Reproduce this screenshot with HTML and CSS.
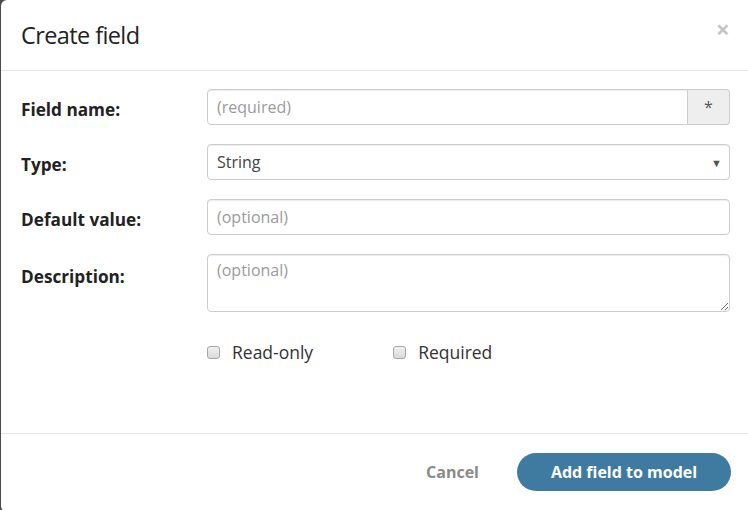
FILE: index.html
```html
<!DOCTYPE html>
<html>
<head>
<meta charset="utf-8">
<link rel="stylesheet" href="styles.css">
</head>
<body>
<div class="modal">
  <div class="modal-header">
    <h1 class="modal-title">Create field</h1>
    <span class="close">×</span>
  </div>
  <form class="modal-body">
    <div class="row">
      <label class="label">Field name:</label>
      <div class="input-group">
        <input class="control group-input" type="text" placeholder="(required)">
        <span class="addon">*</span>
      </div>
    </div>
    <div class="row">
      <label class="label">Type:</label>
      <div class="control select">
        <span>String</span>
        <span class="caret">▼</span>
      </div>
    </div>
    <div class="row">
      <label class="label">Default value:</label>
      <input class="control" type="text" placeholder="(optional)">
    </div>
    <div class="row row-top">
      <label class="label label-top">Description:</label>
      <textarea class="control textarea" placeholder="(optional)"></textarea>
    </div>
    <div class="row checks">
      <span></span>
      <div class="check-list">
        <span class="check"><span class="box"></span>Read-only</span>
        <span class="check"><span class="box"></span>Required</span>
      </div>
    </div>
  </form>
  <div class="modal-footer">
    <button class="btn-link" type="button">Cancel</button>
    <button class="btn-primary" type="button">Add field to model</button>
  </div>
</div>
</body>
</html>
```
FILE: styles.css
```css
html, body {
  margin: 0;
  padding: 0;
  background: #4b4b4b;
  height: 510px;
  overflow: hidden;
}
body {
  font-family: "Open Sans", sans-serif;
  font-size: 16px;
  color: #333;
}
.modal {
  margin-left: 1px;
  width: 760px;
  height: 512px;
  background: #fff;
  border-radius: 6px;
  box-sizing: border-box;
}
.modal-header {
  height: 71px;
  box-sizing: border-box;
  border-bottom: 1px solid #e5e5e5;
  display: flex;
  align-items: center;
  padding: 0 32px 0 20px;
  position: relative;
}
.modal-title {
  margin: 0;
  font-size: 23.5px;
  font-weight: 400;
  letter-spacing: -0.6px;
  color: #222;
  flex: 1;
  padding-bottom: 1px;
}
.close {
  position: absolute;
  left: 715px;
  top: 17px;
  font-size: 24px;
  font-weight: 700;
  color: #c4c4c4;
  line-height: 1;
}
.modal-body {
  padding: 18px 30px 0 20px;
  display: flex;
  flex-direction: column;
  gap: 19px;
  height: 363px;
  box-sizing: border-box;
  border-bottom: 1px solid #e5e5e5;
  margin: 0;
}
.row {
  display: grid;
  grid-template-columns: 186px 523px;
  align-items: center;
}
.row-top {
  align-items: start;
}
.label {
  font-weight: 700;
  font-size: 17.2px;
  color: #222;
  padding-top: 5px;
}
.label-top {
  padding-top: 11px;
}
.control {
  box-sizing: border-box;
  height: 36px;
  border: 1px solid #ccc;
  border-radius: 4px;
  padding: 0 9px;
  font-family: "Open Sans", sans-serif;
  font-size: 16px;
  color: #444;
  box-shadow: inset 0 1px 1px rgba(0,0,0,0.075);
  outline: none;
  width: 100%;
  background: #fff;
}
.control::placeholder {
  color: #9a9a9a;
}
.input-group {
  display: flex;
}
.group-input {
  border-radius: 4px 0 0 4px;
  flex: 1;
}
.addon {
  width: 42px;
  box-sizing: border-box;
  height: 36px;
  border: 1px solid #ccc;
  border-left: none;
  border-radius: 0 4px 4px 0;
  background: #eee;
  display: flex;
  align-items: center;
  justify-content: center;
  color: #555;
  font-size: 16px;
}
.select {
  display: flex;
  align-items: center;
  justify-content: space-between;
  padding-right: 7px;
}
.caret {
  font-size: 11px;
  color: #555;
}
.textarea {
  height: 58px;
  padding-top: 5px;
  resize: both;
  line-height: 1.3;
}
.checks {
  margin-top: 9px;
}
.check-list {
  display: flex;
  gap: 80px;
}
.check {
  display: flex;
  align-items: center;
  gap: 12px;
  color: #333;
  font-size: 17.5px;
}
.box {
  width: 13px;
  height: 13px;
  box-sizing: border-box;
  border: 1px solid #a6a6a6;
  border-radius: 3px;
  background: linear-gradient(#f0f0f0, #dadada);
}
.modal-footer {
  display: flex;
  align-items: center;
  justify-content: flex-end;
  padding: 19px 30px 0 0;
  gap: 38px;
}
.btn-link {
  border: none;
  background: none;
  font-family: "Open Sans", sans-serif;
  font-size: 16px;
  font-weight: 700;
  color: #8a8a8a;
  padding: 0;
}
.btn-primary {
  border: none;
  background: #3f7ba0;
  color: #fff;
  font-family: "Open Sans", sans-serif;
  font-size: 16px;
  font-weight: 700;
  height: 38px;
  width: 214px;
  border-radius: 19px;
  padding: 0;
}
```
